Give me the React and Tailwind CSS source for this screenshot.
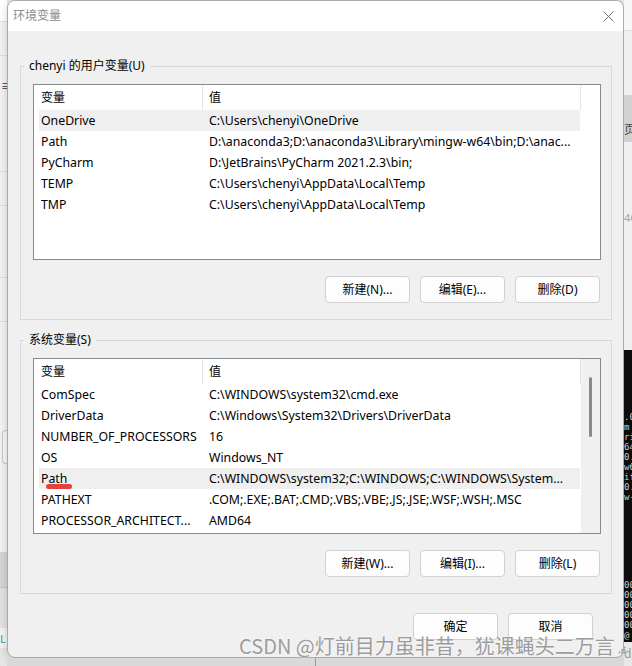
import React from "react";

const F = "font-['Noto_Sans','Noto_Sans_CJK_SC',sans-serif]";

const userRows = [
  ["OneDrive", "C:\\Users\\chenyi\\OneDrive"],
  ["Path", "D:\\anaconda3;D:\\anaconda3\\Library\\mingw-w64\\bin;D:\\anac..."],
  ["PyCharm", "D:\\JetBrains\\PyCharm 2021.2.3\\bin;"],
  ["TEMP", "C:\\Users\\chenyi\\AppData\\Local\\Temp"],
  ["TMP", "C:\\Users\\chenyi\\AppData\\Local\\Temp"],
];

const sysRows = [
  ["ComSpec", "C:\\WINDOWS\\system32\\cmd.exe"],
  ["DriverData", "C:\\Windows\\System32\\Drivers\\DriverData"],
  ["NUMBER_OF_PROCESSORS", "16"],
  ["OS", "Windows_NT"],
  ["Path", "C:\\WINDOWS\\system32;C:\\WINDOWS;C:\\WINDOWS\\System..."],
  ["PATHEXT", ".COM;.EXE;.BAT;.CMD;.VBS;.VBE;.JS;.JSE;.WSF;.WSH;.MSC"],
  ["PROCESSOR_ARCHITECT...", "AMD64"],
];

function Row({ name, value, selected, mark }) {
  return (
    <div
      className={
        "relative flex h-[21px] w-[541px] ml-[5px] items-center pt-[1px] text-[12.3px] " +
        (selected ? "bg-[#efefef]" : "bg-white")
      }
    >
      <div className="w-[168px] shrink-0 pl-[2px] whitespace-nowrap overflow-hidden">{name}</div>
      <div className="flex-1 pl-[2px] whitespace-nowrap overflow-hidden">{value}</div>
      {mark && (
        <span className="absolute left-[7px] top-[16px] w-[26px] h-[5px] rounded-full bg-[#e8413b]" />
      )}
    </div>
  );
}

function ListView({ rows, selected, mark, scroll }) {
  return (
    <div className="flex w-[568px] h-[176px] border border-[#868a91] bg-white text-[12px] text-black">
      <div className="w-[547px] shrink-0 flex flex-col">
        <div className="flex h-[25px] items-center">
          <div className="w-[169px] h-full flex items-center pl-[7px] border-r border-[#e5e5e5]">变量</div>
          <div className="flex-1 h-full flex items-center pl-[6px] border-r border-[#e5e5e5]">值</div>
        </div>
        {rows.map((r, i) => (
          <Row key={i} name={r[0]} value={r[1]} selected={i === selected} mark={mark && i === selected} />
        ))}
      </div>
      {scroll ? (
        <div className="flex-1 flex justify-center pt-[18px] bg-[#f0f0f0]">
          <div className="w-[3px] h-[60px] rounded-full bg-[#8a8a8a]" />
        </div>
      ) : (
        <div className="flex-1 bg-white" />
      )}
    </div>
  );
}

function Btn({ children }) {
  return (
    <div className="w-[85px] h-[27px] flex items-center justify-center rounded-[4px] border border-[#d1d1d1] bg-[#fdfdfd] text-[12px] text-black">
      {children}
    </div>
  );
}

function Group({ label, rows, selected, mark, scroll, buttons, extra }) {
  return (
    <fieldset className={"w-[592px] ml-[12px] border border-[#d9d9d9] " + extra}>
      <legend className="ml-[3px] px-[5px] text-[12px] leading-[16px] text-black">{label}</legend>
      <div className="pl-[12px] pt-[10px] pb-[16px]">
        <ListView rows={rows} selected={selected} mark={mark} scroll={scroll} />
        <div className="flex justify-end gap-[10px] mt-[16px] w-[567px]">
          {buttons.map((b) => (
            <Btn key={b}>{b}</Btn>
          ))}
        </div>
      </div>
    </fieldset>
  );
}

function LeftStrip() {
  return (
    <div className="w-[7px] h-full shrink-0 flex flex-col bg-[#f3f3f3]">
      <div className="h-[22px] bg-white border-b border-[#e2e2e2]" />
      <div className="h-[34px] border-b border-[#dedede]" />
      <div className="h-[60px] flex items-center text-[10px] text-[#333] leading-none pl-[1px]">≡</div>
      <div className="h-[56px] border-b border-[#dedede]" />
      <div className="h-[34px] border-b border-[#dedede]" />
      <div className="h-[72px] border-b border-[#dedede]" />
      <div className="h-[44px] border-b border-[#dedede]" />
      <div className="h-[108px]" />
      <div className="h-[34px] ml-[2px] border border-r-0 border-[#c8c8c8] rounded-l-[4px] bg-[#f8f8f8]" />
      <div className="h-[88px]" />
      <div className="h-[36px] bg-[#d6d6d6] border-b border-[#c2c2c2]" />
      <div className="h-[40px] bg-[#e3e3e3]" />
      <div className="h-[20px] flex items-center text-[11px] text-[#2a9fb5] leading-none overflow-hidden">L</div>
      <div className="flex-1 bg-[#e6e6e6]" />
    </div>
  );
}

function RightStrip() {
  const lines = [".0", "m", "ri", "64", "0.", "w6", "if", "0.", "w-"];
  const zeros = ["00", "00", "00", "00", "00", "@"];
  return (
    <div className="w-[8px] h-full shrink-0 flex flex-col bg-[#f0f0f0] overflow-hidden">
      <div className="h-[31px] bg-[#f7f7f7] border-b border-[#dddddd]" />
      <div className="h-[64px]" />
      <div className="h-[47px] bg-[#d2d2d2] flex items-end pb-[6px] text-[12px] text-[#444] leading-none">页</div>
      <div className="h-[70px]" />
      <div className="h-[16px] text-[11px] text-[#9aa] leading-none">4C</div>
      <div className="h-[122px]" />
      <div className="h-[292px] bg-[#0c0c0c] flex flex-col pt-[62px] font-['DejaVu_Sans_Mono',monospace] text-[9px] leading-[10px] text-[#cccccc]">
        {lines.map((l, i) => (
          <div key={i} className="whitespace-nowrap">{l}</div>
        ))}
        <div className="h-[78px]" />
        {zeros.map((l, i) => (
          <div key={"z" + i} className="whitespace-nowrap">{l}</div>
        ))}
      </div>
      <div className="flex-1 bg-[#e8e8e8] text-[12px] text-[#999] leading-none pt-[6px]">d</div>
    </div>
  );
}

export default function App() {
  return (
    <div className={"relative w-[632px] h-[666px] overflow-hidden flex bg-[#e9e9e9] " + F}>
      <LeftStrip />
      <div className="w-[617px] shrink-0 flex flex-col">
        <div className="w-[617px] h-[658px] shrink-0 flex flex-col rounded-[8px] border border-[#a9a9a9] bg-[#f0f0f0] overflow-hidden shadow-[0_2px_10px_rgba(0,0,0,0.18)]">
          <div className="h-[30px] shrink-0 bg-white flex items-center justify-between pl-[5px] pr-[9px]">
            <span className="text-[12px] text-[#8c8c8c]">环境变量</span>
            <svg width="11" height="11" viewBox="0 0 11 11" className="block">
              <path d="M0.5 0.5 L10.5 10.5 M10.5 0.5 L0.5 10.5" stroke="#6b6b6b" strokeWidth="1" fill="none" />
            </svg>
          </div>
          <div className="flex-1 flex flex-col pt-[27px]">
            <Group
              label="chenyi 的用户变量(U)"
              rows={userRows}
              selected={0}
              buttons={["新建(N)...", "编辑(E)...", "删除(D)"]}
              extra=""
            />
            <Group
              label="系统变量(S)"
              rows={sysRows}
              selected={4}
              mark
              scroll
              buttons={["新建(W)...", "编辑(I)...", "删除(L)"]}
              extra="mt-[12px]"
            />
            <div className="flex justify-end gap-[10px] pr-[30px] mt-[19px]">
              <Btn>确定</Btn>
              <Btn>取消</Btn>
            </div>
          </div>
        </div>
        <div className="flex-1 flex bg-[#d9d9d9]">
          <div className="w-[309px] border-r border-[#9a9a9a]" />
        </div>
      </div>
      <RightStrip />
      <div className="absolute left-[239px] top-[633px] flex items-end gap-[3px] pointer-events-none">
        <span className="text-[20px] leading-[26px] text-[#9c9c9c] [text-shadow:0_0_2px_#ffffff] whitespace-nowrap font-['Noto_Sans_CJK_SC',sans-serif]">
          CSDN @灯前目力虽非昔，犹课蝇头二万言
        </span>
        <svg width="8" height="8" viewBox="0 0 8 8" className="mb-[5px]">
          <circle cx="1.5" cy="6.5" r="1" fill="#9a9a9a" />
          <circle cx="4" cy="6.5" r="1" fill="#9a9a9a" />
          <circle cx="6.5" cy="6.5" r="1" fill="#9a9a9a" />
          <circle cx="4" cy="4" r="1" fill="#9a9a9a" />
          <circle cx="6.5" cy="4" r="1" fill="#9a9a9a" />
          <circle cx="6.5" cy="1.5" r="1" fill="#9a9a9a" />
        </svg>
      </div>
    </div>
  );
}
